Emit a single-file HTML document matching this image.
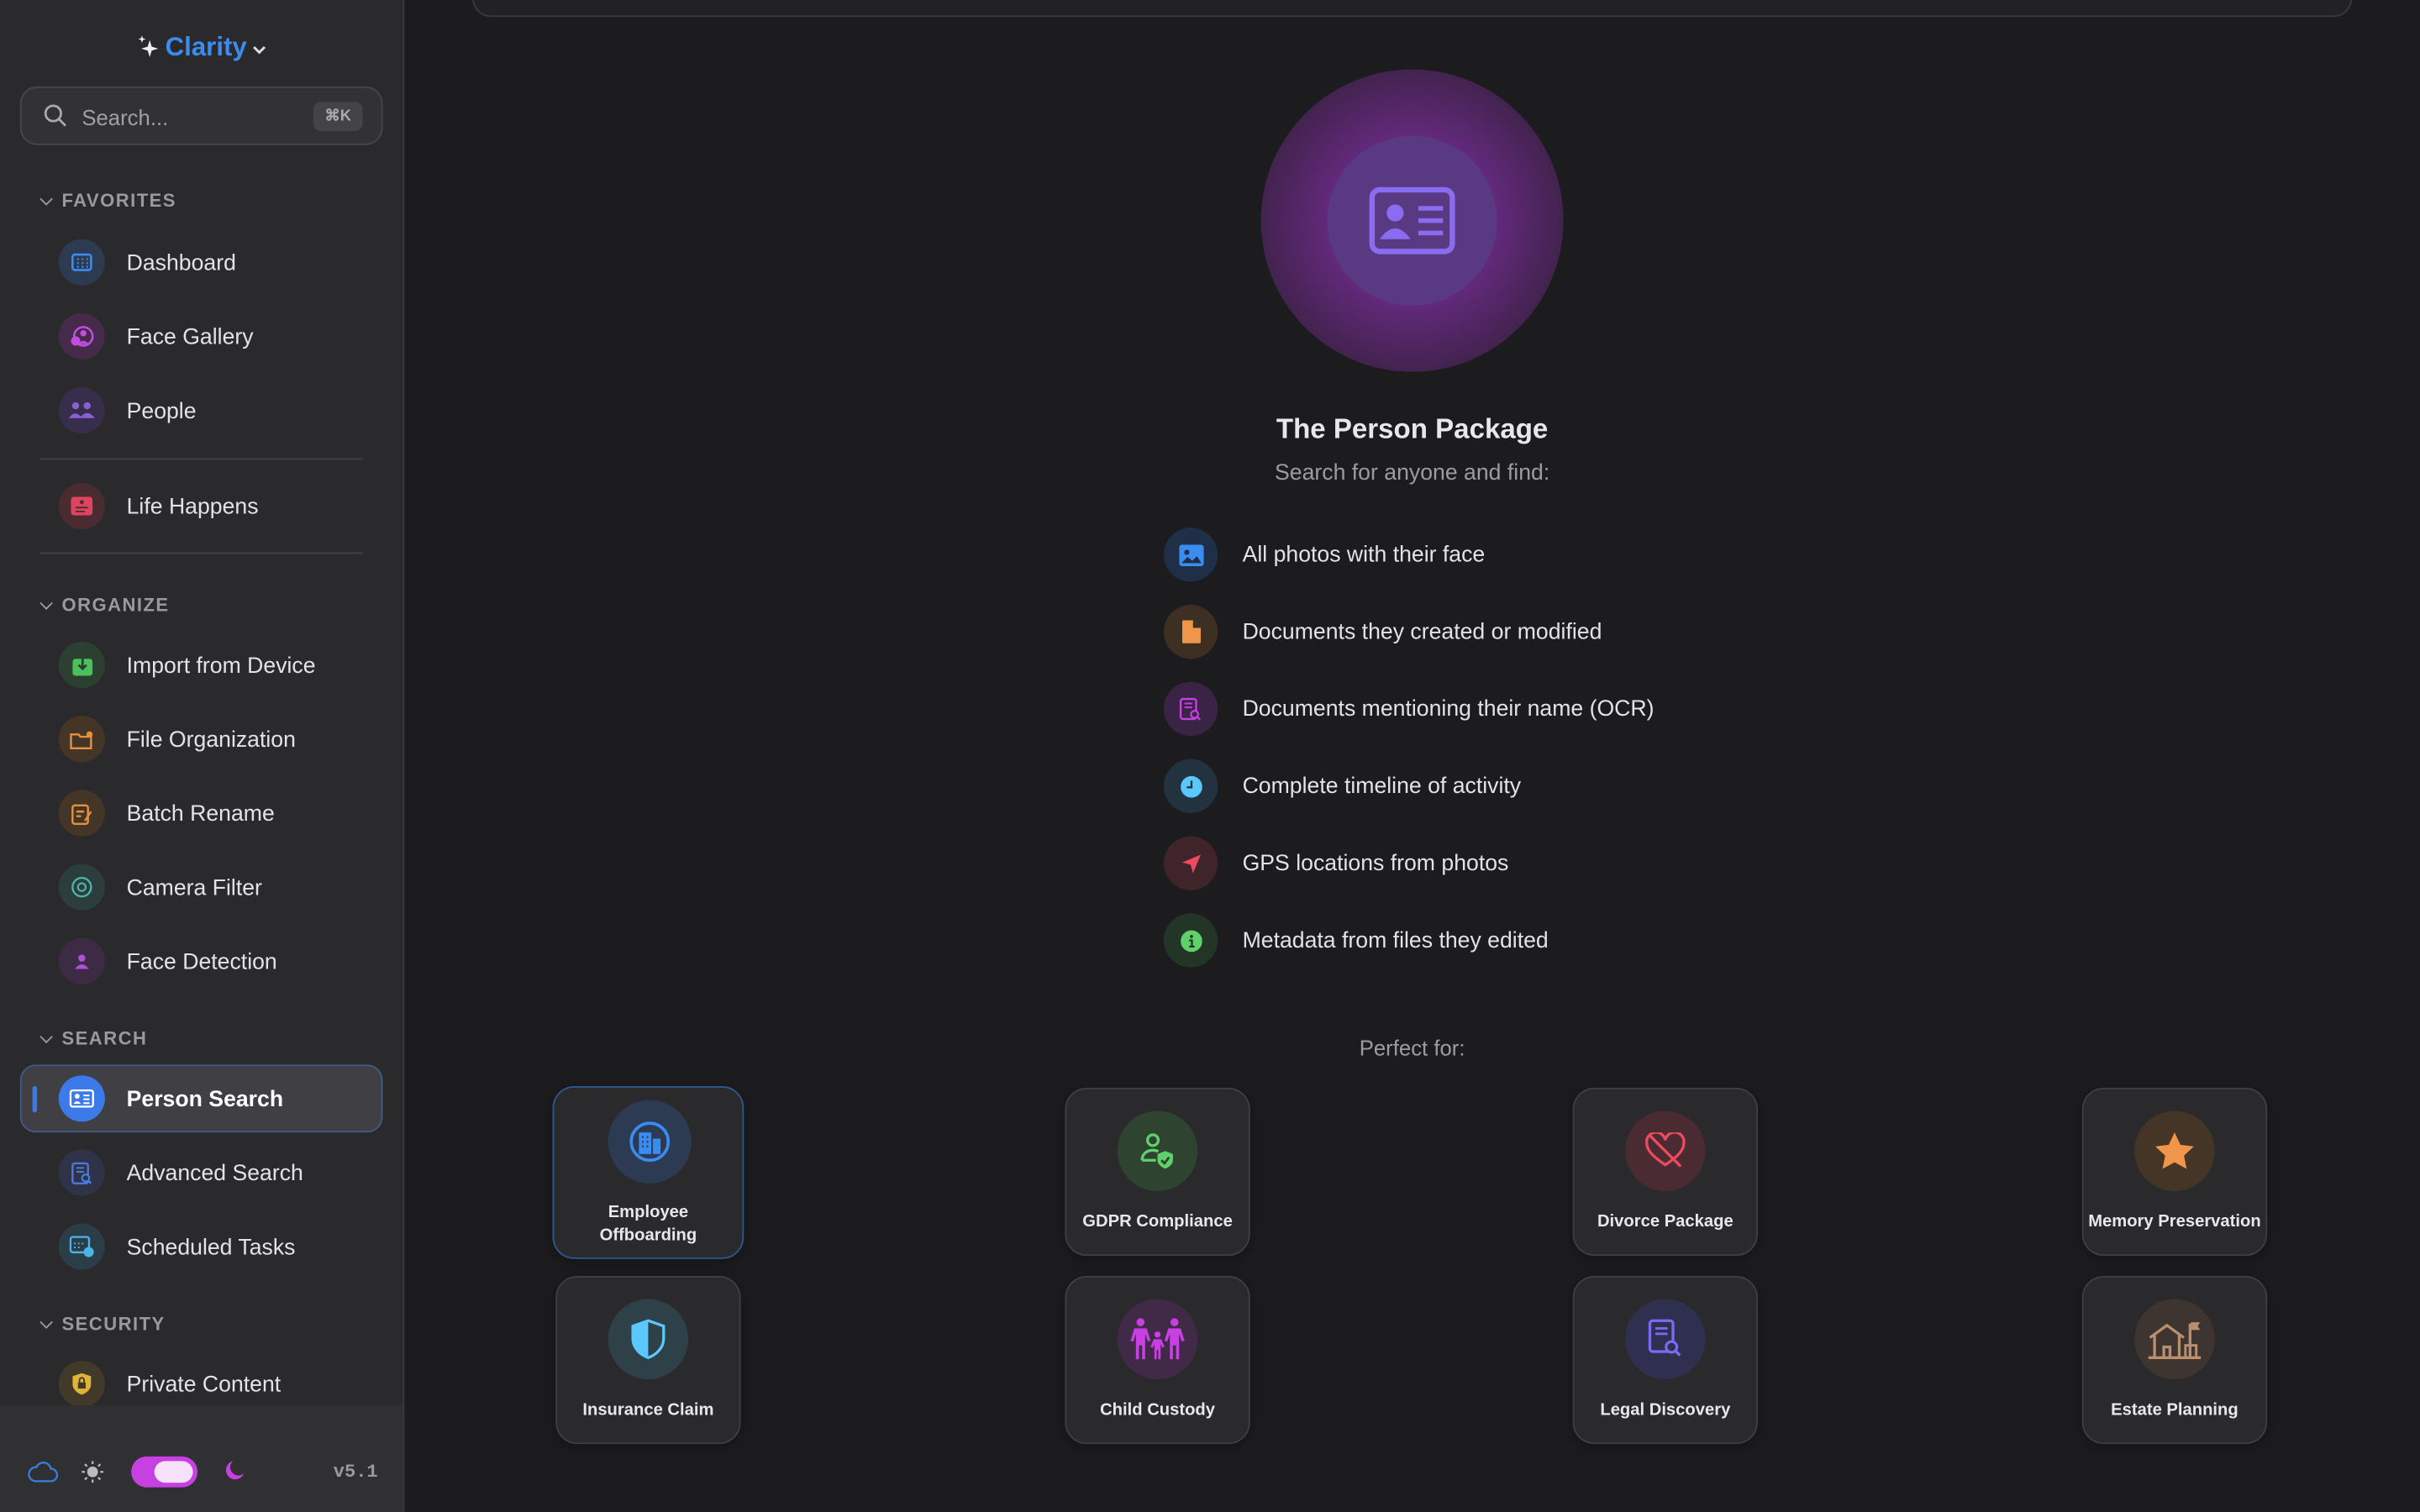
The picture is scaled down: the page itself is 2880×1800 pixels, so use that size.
<!DOCTYPE html>
<html><head><meta charset="utf-8"><style>
*{box-sizing:border-box;margin:0;padding:0}
html,body{width:2880px;height:1800px;overflow:hidden;background:#1c1c1e}
#s{width:1568px;height:980px;transform:scale(1.836735);transform-origin:0 0;position:relative;font-family:"Liberation Sans",sans-serif;color:#e6e6e8;background:#1c1c1e}
.sb{position:absolute;left:0;top:0;width:262px;height:980px;background:#2a2a2d;border-right:1px solid #3a3a3d}
.logo{position:absolute;top:21px;left:0;width:262px;text-align:center;font-weight:bold;font-size:17px;color:#3b8cf0}
.search{position:absolute;left:13px;top:56px;width:235px;height:38px;border:1px solid #47474a;background:#323235;border-radius:11px}
.search span{position:absolute;left:39px;top:11px;font-size:14px;color:#a0a0a4}
.kbd{position:absolute;right:12px;top:9px;width:32px;height:19px;background:#444447;border-radius:5px;font-size:10px;color:#aaa;text-align:center;line-height:19px;font-weight:bold}
.hd{position:absolute;left:40px;font-size:12px;font-weight:bold;color:#9a9a9e;letter-spacing:.8px}
.hd:before{content:"";position:absolute;left:-13px;top:3px;width:5px;height:5px;border-right:1.5px solid #9a9a9e;border-bottom:1.5px solid #9a9a9e;transform:rotate(45deg)}
.it{position:absolute;left:38px;height:30px;width:210px}
.ic{position:absolute;left:0;top:0;width:30px;height:30px;border-radius:50%;display:flex;align-items:center;justify-content:center}
.it .t{position:absolute;left:44px;top:8px;font-size:14.5px;color:#e3e3e5}
.dv{position:absolute;left:26px;width:209px;height:1px;background:#434346}
.sel{position:absolute;left:13px;top:690px;width:235px;height:44px;border:1px solid #3f5b8a;background:#404044;border-radius:10px}
.sel:before{content:"";position:absolute;left:7px;top:13px;width:3px;height:17px;background:#3b7ae8;border-radius:2px}
.bot{position:absolute;left:0;top:911px;width:261px;height:69px;background:#303033}
.topcard{position:absolute;left:306px;top:-20px;width:1218px;height:31px;border:1px solid #3a3a3d;border-radius:12px;background:#222224}
.li{position:absolute;left:754px;height:35px}
.li .ic{width:35px;height:35px}
.li .t{position:absolute;left:51px;top:10px;font-size:14.5px;white-space:nowrap;color:#e3e3e5}
.cd{position:absolute;width:120px;height:109px;border:1px solid #3f3f42;border-radius:14px;background:#2a2a2d;box-shadow:0 2px 8px rgba(0,0,0,.3)}
.cd .ic{position:absolute;left:33px;top:14px;width:52px;height:52px}
.cd .t{position:absolute;left:0;right:0;top:80px;text-align:center;font-size:11px;font-weight:bold;color:#e8e8ea}
</style></head><body><div id="s">
<div class="sb">
 <div class="logo"><svg width="14" height="16" viewBox="0 0 14 16" style="vertical-align:-2px;margin-right:4px"><path d="M8 4 L9.3 8.2 L13.5 9.5 L9.3 10.8 L8 15 L6.7 10.8 L2.5 9.5 L6.7 8.2Z" fill="#eee"/><path d="M3 1 L3.6 2.8 L5.4 3.4 L3.6 4 L3 5.8 L2.4 4 L.6 3.4 L2.4 2.8Z" fill="#eee"/></svg>Clarity<svg width="10" height="8" viewBox="0 0 10 8" style="margin-left:3px"><path d="M1.5 2.5 L5 6 L8.5 2.5" stroke="#ddd" stroke-width="1.6" fill="none"/></svg></div>
 <div class="search"><svg width="16" height="16" viewBox="0 0 16 16" style="position:absolute;left:14px;top:10px"><circle cx="6.5" cy="6.5" r="5" stroke="#aaa" stroke-width="1.5" fill="none"/><path d="M10 10 L14.5 14.5" stroke="#aaa" stroke-width="1.5"/></svg><span>Search...</span><div class="kbd">⌘K</div></div>
 <div class="hd" style="top:123px">FAVORITES</div>
 <div class="it" style="top:155px"><div class="ic" style="background:#2c3a52"><svg width="14" height="12"><rect x="1" y="1" width="12" height="10" rx="1.5" stroke="#3b8cf0" stroke-width="1.4" fill="none"/><path d="M4 4h1M7 4h1M10 4h1M4 6.5h1M7 6.5h1M10 6.5h1M4 9h1M7 9h1M10 9h1" stroke="#3b8cf0" stroke-width="1.3"/></svg></div><div class="t">Dashboard</div></div>
 <div class="it" style="top:203px"><div class="ic" style="background:#452a4a"><svg width="16" height="14"><circle cx="9" cy="7" r="6" stroke="#c24de0" stroke-width="1.4" fill="none"/><circle cx="9" cy="5" r="2" fill="#c24de0"/><path d="M5.5 12 Q9 8 12.5 12Z" fill="#c24de0"/><circle cx="4" cy="10" r="3" fill="#c24de0"/></svg></div><div class="t">Face Gallery</div></div>
 <div class="it" style="top:251px"><div class="ic" style="background:#362e4a"><svg width="18" height="12"><circle cx="5" cy="3" r="2.3" fill="#8c5fd6"/><circle cx="12.5" cy="3" r="2.3" fill="#8c5fd6"/><path d="M0.5 11 Q5 5 9 11Z M7.5 11 Q12.5 4.5 17.5 11Z" fill="#8c5fd6"/></svg></div><div class="t">People</div></div>
 <div class="dv" style="top:297px"></div>
 <div class="it" style="top:313px"><div class="ic" style="background:#4a2b32"><svg width="14" height="12"><rect x="0" y="0" width="14" height="12" rx="2" fill="#e0445c"/><path d="M3 7h8M3 9.5h6" stroke="#4a2b32" stroke-width="1"/><circle cx="7" cy="3.5" r="1.3" fill="#4a2b32"/></svg></div><div class="t">Life Happens</div></div>
 <div class="dv" style="top:358px"></div>
 <div class="hd" style="top:385px">ORGANIZE</div>
 <div class="it" style="top:416px"><div class="ic" style="background:#2b4030"><svg width="13" height="13"><rect x="0" y="2" width="13" height="11" rx="2" fill="#4cc05a"/><path d="M6.5 0v8M4 6l2.5 2.5L9 6" stroke="#2b4030" stroke-width="1.5" fill="none"/></svg></div><div class="t">Import from Device</div></div>
 <div class="it" style="top:464px"><div class="ic" style="background:#453526"><svg width="16" height="13"><path d="M1 3h5l1 1.5h7v7.5H1Z" stroke="#e8913a" stroke-width="1.3" fill="none"/><circle cx="13" cy="3" r="2" fill="#e8913a"/></svg></div><div class="t">File Organization</div></div>
 <div class="it" style="top:512px"><div class="ic" style="background:#453526"><svg width="14" height="15"><rect x="1" y="2" width="10" height="12" rx="1.5" stroke="#e8913a" stroke-width="1.3" fill="none"/><path d="M3.5 6h5M3.5 9h3M9 12l4-6" stroke="#e8913a" stroke-width="1.3"/></svg></div><div class="t">Batch Rename</div></div>
 <div class="it" style="top:560px"><div class="ic" style="background:#2b3d3d"><svg width="14" height="14"><circle cx="7" cy="7" r="6" stroke="#4bb3a8" stroke-width="1.3" fill="none"/><circle cx="7" cy="7" r="2.5" stroke="#4bb3a8" stroke-width="1.2" fill="none"/></svg></div><div class="t">Camera Filter</div></div>
 <div class="it" style="top:608px"><div class="ic" style="background:#3d2b45"><svg width="14" height="12"><circle cx="7" cy="4" r="2.3" fill="#b24fd8"/><path d="M2.5 11 Q7 5 11.5 11Z" fill="#b24fd8"/></svg></div><div class="t">Face Detection</div></div>
 <div class="hd" style="top:666px">SEARCH</div>
 <div class="sel"></div>
 <div class="it" style="top:697px"><div class="ic" style="background:#3b7ae8"><svg width="16" height="12"><rect x=".7" y=".7" width="14.6" height="10.6" rx="1.5" stroke="#fff" stroke-width="1.3" fill="none"/><circle cx="5" cy="4.5" r="1.6" fill="#fff"/><path d="M2.5 9.5 Q5 6 7.5 9.5Z" fill="#fff"/><path d="M9 4h4M9 6.5h4M9 9h4" stroke="#fff" stroke-width="1.1"/></svg></div><div class="t" style="font-weight:bold;color:#fff">Person Search</div></div>
 <div class="it" style="top:745px"><div class="ic" style="background:#2e3347"><svg width="14" height="15"><rect x="1" y="1" width="10" height="13" rx="1.5" stroke="#4a78e0" stroke-width="1.3" fill="none"/><path d="M3.5 4h5M3.5 6.5h5" stroke="#4a78e0" stroke-width="1.1"/><circle cx="9.5" cy="10.5" r="2.3" stroke="#4a78e0" stroke-width="1.2" fill="#2e3347"/><path d="M11 12l2 2" stroke="#4a78e0" stroke-width="1.3"/></svg></div><div class="t">Advanced Search</div></div>
 <div class="it" style="top:793px"><div class="ic" style="background:#2b3d47"><svg width="16" height="14"><rect x="0.7" y="0.7" width="12" height="10" rx="1.5" stroke="#4ab4e8" stroke-width="1.3" fill="none"/><path d="M3 5h1M5.5 5h1M8 5h1M3 7.5h1M5.5 7.5h1" stroke="#4ab4e8" stroke-width="1.1"/><circle cx="12.5" cy="10.5" r="3.3" fill="#4ab4e8"/></svg></div><div class="t">Scheduled Tasks</div></div>
 <div class="hd" style="top:851px">SECURITY</div>
 <div class="it" style="top:882px"><div class="ic" style="background:#423a28"><svg width="12" height="14"><path d="M6 0L12 2v5c0 3.5-3 6-6 7C3 13 0 10.5 0 7V2Z" fill="#e0b43a"/><rect x="3.5" y="6" width="5" height="4" fill="#423a28"/><path d="M4.5 6V4.5a1.5 1.5 0 013 0V6" stroke="#423a28" stroke-width="1" fill="none"/></svg></div><div class="t">Private Content</div></div>
 <div class="bot">
  <svg width="20" height="14" style="position:absolute;left:18px;top:36px" viewBox="0 0 20 14"><path d="M5 13h10a4 4 0 000-8 5 5 0 00-9.5-1A4.5 4.5 0 005 13Z" stroke="#3a7ad8" stroke-width="1.3" fill="none"/></svg>
  <svg width="16" height="16" style="position:absolute;left:52px;top:35px" viewBox="0 0 16 16"><circle cx="8" cy="8" r="3.5" fill="#bbb"/><path d="M8 1v2M8 13v2M1 8h2M13 8h2M3 3l1.4 1.4M11.6 11.6L13 13M3 13l1.4-1.4M11.6 4.4L13 3" stroke="#bbb" stroke-width="1.2"/></svg>
  <div style="position:absolute;left:85px;top:33px;width:43px;height:20px;border-radius:10px;background:#c640e2"><div style="position:absolute;left:15px;top:3px;width:25px;height:14px;border-radius:7px;background:#f5e2fa"></div></div>
  <svg width="14" height="14" style="position:absolute;left:145px;top:35px" viewBox="0 0 14 14"><path d="M6 1a6 6 0 107 8A5 5 0 016 1Z" fill="#c640e2"/></svg>
  <div style="position:absolute;left:216px;top:36px;font-family:'Liberation Mono',monospace;font-size:12px;font-weight:bold;color:#9a9a9e">v5.1</div>
 </div>
</div>
<div class="topcard"></div>
<div style="position:absolute;left:817px;top:45px;width:196px;height:196px;border-radius:50%;background:radial-gradient(circle,#7a2e95 0%,#62297a 40%,#3e2249 75%,#261f2a 100%)"></div>
<div style="position:absolute;left:860px;top:88px;width:110px;height:110px;border-radius:50%;background:#593a82;display:flex;align-items:center;justify-content:center"><svg width="56" height="44" viewBox="0 0 56 44"><rect x="2" y="2" width="52" height="40" rx="5" stroke="#8a6cf0" stroke-width="3.5" fill="none"/><circle cx="17" cy="17" r="5.5" fill="#8a6cf0"/><path d="M7 34 Q17 20 27 34Z" fill="#8a6cf0"/><path d="M32 14h16M32 22h16M32 30h16" stroke="#8a6cf0" stroke-width="3"/></svg></div>
<div style="position:absolute;left:0;width:1830px;top:268px;text-align:center;font-size:18px;font-weight:bold;color:#e8e8ea">The Person Package</div>
<div style="position:absolute;left:0;width:1830px;top:299px;text-align:center;font-size:14.5px;color:#9c9ca0">Search for anyone and find:</div>
<div class="li" style="top:342px"><div class="ic" style="background:#1f2f47"><svg width="16" height="14"><rect x="0" y="0" width="16" height="14" rx="2" fill="#3b8cf0"/><circle cx="5" cy="5" r="1.7" fill="#1f2f47"/><path d="M1.5 12l4-4 3 2.5 3-3 3 4.5Z" fill="#1f2f47"/></svg></div><div class="t">All photos with their face</div></div>
<div class="li" style="top:392px"><div class="ic" style="background:#3d2f22"><svg width="12" height="15"><path d="M1 0h6l5 5v9a1 1 0 01-1 1H1a1 1 0 01-1-1V1a1 1 0 011-1Z" fill="#f0964a"/><path d="M7 0v5h5" fill="#3d2f22"/></svg></div><div class="t">Documents they created or modified</div></div>
<div class="li" style="top:442px"><div class="ic" style="background:#3a2445"><svg width="15" height="16"><rect x="1" y="1" width="10" height="13" rx="1.5" stroke="#c640e2" stroke-width="1.3" fill="none"/><path d="M3.5 4h5M3.5 6.5h5" stroke="#c640e2" stroke-width="1.1"/><circle cx="10" cy="11" r="2.3" stroke="#c640e2" stroke-width="1.2" fill="#3a2445"/><path d="M11.5 12.5l2 2" stroke="#c640e2" stroke-width="1.3"/></svg></div><div class="t">Documents mentioning their name (OCR)</div></div>
<div class="li" style="top:492px"><div class="ic" style="background:#22333f"><svg width="14" height="14"><circle cx="7" cy="7" r="7" fill="#5ac8fa"/><path d="M7 3v4.3H4" stroke="#22333f" stroke-width="1.3" fill="none"/></svg></div><div class="t">Complete timeline of activity</div></div>
<div class="li" style="top:542px"><div class="ic" style="background:#3f242a"><svg width="14" height="14"><path d="M13 1L1 6l5.5 1.5L8 13Z" fill="#ec4a5e"/></svg></div><div class="t">GPS locations from photos</div></div>
<div class="li" style="top:592px"><div class="ic" style="background:#223526"><svg width="14" height="14"><circle cx="7" cy="7" r="7" fill="#5fd06a"/><circle cx="7" cy="4" r="1" fill="#223526"/><path d="M5.5 6.5H7.3V10.5M5.5 10.5h3.5" stroke="#223526" stroke-width="1.2" fill="none"/></svg></div><div class="t">Metadata from files they edited</div></div>
<div style="position:absolute;left:0;width:1830px;top:671px;text-align:center;font-size:14px;color:#9c9ca0">Perfect for:</div>

<div class="cd" style="left:358px;top:704px;width:124px;height:112px;border-color:#2f5890"><div class="ic" style="background:#2c3a52;left:35px;top:8px;width:54px;height:54px"><svg width="26" height="26" viewBox="0 0 26 26"><circle cx="13" cy="13" r="12" stroke="#3b8cf0" stroke-width="2" fill="none"/><rect x="6" y="7" width="8" height="14" fill="#3b8cf0"/><rect x="15" y="11" width="5" height="10" fill="#3b8cf0"/><path d="M8 10h1M11 10h1M8 13h1M11 13h1M8 16h1M11 16h1" stroke="#2c3a52" stroke-width="1.3"/></svg></div><div class="t" style="top:74px;line-height:15px">Employee<br>Offboarding</div></div>
<div class="cd" style="left:690px;top:705px"><div class="ic" style="background:#2e4330;left:33px"><svg width="26" height="26" viewBox="0 0 26 26"><circle cx="10" cy="6" r="3.5" stroke="#5fd06a" stroke-width="1.8" fill="none"/><path d="M3 19c0-4 3-6.5 7-6.5 1.5 0 2.5.3 3.5.8M3 19h9" stroke="#5fd06a" stroke-width="1.8" fill="none"/><path d="M18 13l5 2v4c0 2.5-2.5 4.5-5 5.5-2.5-1-5-3-5-5.5v-4Z" fill="#5fd06a"/><path d="M15.5 19l2 2 3-4" stroke="#2e4330" stroke-width="1.5" fill="none"/></svg></div><div class="t">GDPR Compliance</div></div>
<div class="cd" style="left:1019px;top:705px"><div class="ic" style="background:#4a2b32"><svg width="26" height="24" viewBox="0 0 26 24"><path d="M13 21C4 15 1 11 1 7a5.5 5.5 0 0112-2 5.5 5.5 0 0112 2c0 4-3 8-12 14Z" stroke="#ec4a5e" stroke-width="1.8" fill="none"/><path d="M3 2l20 20" stroke="#ec4a5e" stroke-width="1.8"/></svg></div><div class="t">Divorce Package</div></div>
<div class="cd" style="left:1349px;top:705px"><div class="ic" style="background:#453526"><svg width="28" height="26" viewBox="0 0 28 26"><path d="M14 1l3.8 8 8.7 1-6.4 6 1.7 8.6L14 20.3 6.2 24.6 7.9 16 1.5 10l8.7-1Z" fill="#f0964a"/></svg></div><div class="t">Memory Preservation</div></div>

<div class="cd" style="left:360px;top:827px"><div class="ic" style="background:#2e4048"><svg width="22" height="26" viewBox="0 0 22 26"><path d="M11 1l10 3.5v8c0 6-4.5 10.5-10 12.5C5.5 23 1 18.5 1 12.5v-8Z" stroke="#5ac8fa" stroke-width="1.8" fill="none"/><path d="M11 1L1 4.5v8C1 18.5 5.5 23 11 25Z" fill="#5ac8fa"/></svg></div><div class="t">Insurance Claim</div></div>
<div class="cd" style="left:690px;top:827px"><div class="ic" style="background:#402a48"><svg width="36" height="28" viewBox="0 0 36 28"><g fill="#c640e2"><circle cx="7" cy="3" r="2.6"/><path d="M3 7h8l2.5 8-1.8.5-1.7-5V27H8v-9H6v9H4V10.5L2.3 15.5.5 15Z"/><circle cx="29" cy="3" r="2.6"/><path d="M25 7h8l2.5 8-1.8.5-1.7-5V27H30v-9h-2v9h-2V10.5L24.3 15.5 22.5 15Z"/><circle cx="18" cy="11" r="2"/><path d="M15.5 14h5l2 5-1.5.5-1-2.5V27h-1.5v-6h-1v6H16V17l-1 2.5-1.5-.5Z"/></g></svg></div><div class="t">Child Custody</div></div>
<div class="cd" style="left:1019px;top:827px"><div class="ic" style="background:#2f3050"><svg width="24" height="26" viewBox="0 0 24 26"><rect x="2" y="1" width="15" height="20" rx="2" stroke="#7a6cf0" stroke-width="1.8" fill="none"/><path d="M5.5 6h8M5.5 9.5h8" stroke="#7a6cf0" stroke-width="1.5"/><circle cx="16" cy="18" r="3.5" stroke="#7a6cf0" stroke-width="1.7" fill="#2f3050"/><path d="M18.5 20.5l3 3" stroke="#7a6cf0" stroke-width="1.8"/></svg></div><div class="t">Legal Discovery</div></div>
<div class="cd" style="left:1349px;top:827px"><div class="ic" style="background:#3e3530"><svg width="36" height="28" viewBox="0 0 36 28"><g fill="none" stroke="#b89070" stroke-width="1.8"><path d="M2 13L13 5l11 8M5 11v15h16V11M11 26v-7h4v7M1 26h34M28 26V4"/></g><path d="M28.5 3h6l-1.5 2.5 1.5 2.5h-6Z" fill="#b89070"/><rect x="25" y="18" width="7" height="8" stroke="#b89070" stroke-width="1.6" fill="none"/></svg></div><div class="t">Estate Planning</div></div>
</div></body></html>
